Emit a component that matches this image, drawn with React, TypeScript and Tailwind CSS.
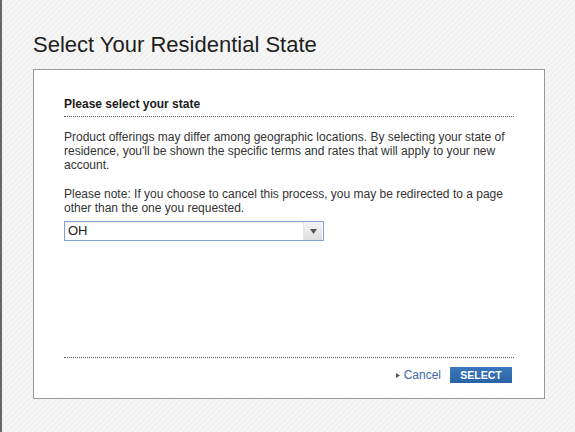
import React from "react";

export default function App() {
  return (
    <div
      className="w-[575px] h-[432px] overflow-hidden border-l-2 border-[#666] pl-[31px] pt-[32px] bg-[repeating-linear-gradient(135deg,#f1f1f1_0px,#f1f1f1_2px,#f6f6f6_2px,#f6f6f6_4px)]"
      style={{ fontFamily: '"Liberation Sans", Arial, sans-serif' }}
    >
      <h1 className="text-[22px] leading-[26px] text-[#1e1e1e] font-normal">
        Select Your Residential State
      </h1>
      <div className="mt-[11px] w-[512px] h-[330px] bg-white border border-[#999] px-[30px] pt-[27px] pb-[15px] flex flex-col">
        <h2 className="text-[12px] leading-[14px] font-bold text-[#1a1a1a] pb-[5px] border-b border-dotted border-[#555]">
          Please select your state
        </h2>
        <p className="mt-[13px] text-[12px] leading-[14px] text-[#333] -mr-[14px]">
          Product offerings may differ among geographic locations. By selecting your state of
          residence, you'll be shown the specific terms and rates that will apply to your new
          account.
        </p>
        <p className="mt-[15px] text-[12px] leading-[14px] text-[#333]">
          Please note: If you choose to cancel this process, you may be redirected to a page
          other than the one you requested.
        </p>
        <div className="mt-[6px] w-[260px] h-[20px] border border-[#7fa3d6] flex items-stretch bg-white shadow-[inset_0_1px_2px_rgba(0,0,0,0.08)]">
          <div className="flex-1 pl-[3px] text-[13px] leading-[18px] text-[#222]">OH</div>
          <div className="w-[19px] mr-[1px] bg-[linear-gradient(#f4f4f4,#dedede)] border-l border-[#e4e4e4] flex items-center justify-center">
            <svg width="7" height="5" viewBox="0 0 7 5">
              <path d="M0 0 L7 0 L3.5 5 Z" fill="#555" />
            </svg>
          </div>
        </div>
        <div className="flex-1" />
        <div className="border-t border-dotted border-[#555] pt-[9px] flex justify-end items-center">
          <a className="flex items-center text-[12px] leading-[16px] text-[#3b6aa0] mr-[9px]">
            <svg width="4" height="5" viewBox="0 0 4 5" className="mr-[4px]">
              <path d="M0 0 L4 2.5 L0 5 Z" fill="#555" />
            </svg>
            Cancel
          </a>
          <button className="w-[62px] h-[16px] mr-[2px] bg-[linear-gradient(#3a78bb,#2a64a6)] text-white text-[10.5px] font-bold leading-[16px] text-center">
            SELECT
          </button>
        </div>
      </div>
    </div>
  );
}
